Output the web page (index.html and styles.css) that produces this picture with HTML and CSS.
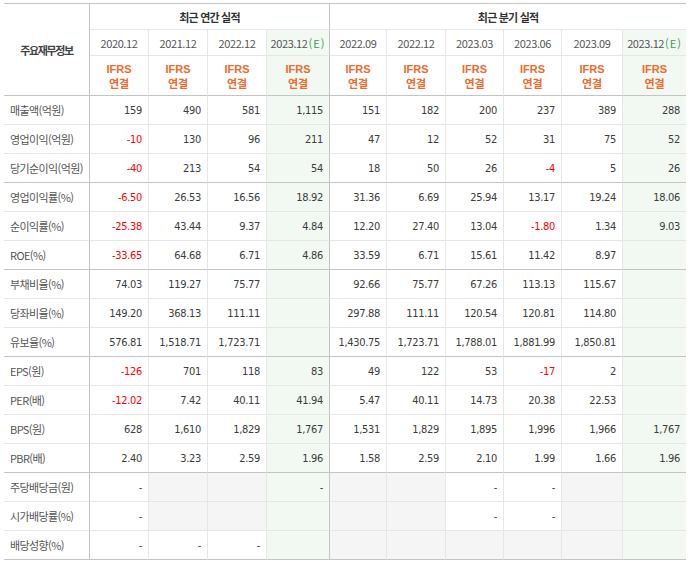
FILE: index.html
```html
<!DOCTYPE html>
<html lang="ko">
<head>
<meta charset="utf-8">
<title>주요재무정보</title>
<link rel="stylesheet" href="styles.css">
</head>
<body>
<table class="fin">
  <colgroup>
    <col class="c-label">
    <col class="c59"><col class="c59"><col class="c59"><col class="c63">
    <col class="c57"><col class="c59"><col class="c58"><col class="c58"><col class="c61"><col class="c63">
  </colgroup>
  <thead>
    <tr class="h1">
      <th rowspan="3" class="corner sep">주요재무정보</th>
      <th colspan="4" class="grp sep">최근 연간 실적</th>
      <th colspan="6" class="grp last">최근 분기 실적</th>
    </tr>
    <tr class="h2">
      <th class="date">2020.12</th>
      <th class="date">2021.12</th>
      <th class="date">2022.12</th>
      <th class="date est sep">2023.12<span class="e">(E)</span></th>
      <th class="date">2022.09</th>
      <th class="date">2022.12</th>
      <th class="date">2023.03</th>
      <th class="date">2023.06</th>
      <th class="date">2023.09</th>
      <th class="date est last">2023.12<span class="e">(E)</span></th>
    </tr>
    <tr class="h3">
      <th class="ifrs"><span class="ifrs-a">IFRS</span><span class="ifrs-b">연결</span></th>
      <th class="ifrs"><span class="ifrs-a">IFRS</span><span class="ifrs-b">연결</span></th>
      <th class="ifrs"><span class="ifrs-a">IFRS</span><span class="ifrs-b">연결</span></th>
      <th class="ifrs est sep"><span class="ifrs-a">IFRS</span><span class="ifrs-b">연결</span></th>
      <th class="ifrs"><span class="ifrs-a">IFRS</span><span class="ifrs-b">연결</span></th>
      <th class="ifrs"><span class="ifrs-a">IFRS</span><span class="ifrs-b">연결</span></th>
      <th class="ifrs"><span class="ifrs-a">IFRS</span><span class="ifrs-b">연결</span></th>
      <th class="ifrs"><span class="ifrs-a">IFRS</span><span class="ifrs-b">연결</span></th>
      <th class="ifrs"><span class="ifrs-a">IFRS</span><span class="ifrs-b">연결</span></th>
      <th class="ifrs est last"><span class="ifrs-a">IFRS</span><span class="ifrs-b">연결</span></th>
    </tr>
  </thead>
  <tbody id="rows"></tbody>
</table>
<script src="app.js"></script>
</body>
</html>
```

FILE: app.js
```js
var data = [
  ["매출액(억원)", ["159","490","581","1,115","151","182","200","237","389","288"], false],
  ["영업이익(억원)", ["-10","130","96","211","47","12","52","31","75","52"], false],
  ["당기순이익(억원)", ["-40","213","54","54","18","50","26","-4","5","26"], true],
  ["영업이익률(%)", ["-6.50","26.53","16.56","18.92","31.36","6.69","25.94","13.17","19.24","18.06"], false],
  ["순이익률(%)", ["-25.38","43.44","9.37","4.84","12.20","27.40","13.04","-1.80","1.34","9.03"], false],
  ["ROE(%)", ["-33.65","64.68","6.71","4.86","33.59","6.71","15.61","11.42","8.97",""], true],
  ["부채비율(%)", ["74.03","119.27","75.77","","92.66","75.77","67.26","113.13","115.67",""], false],
  ["당좌비율(%)", ["149.20","368.13","111.11","","297.88","111.11","120.54","120.81","114.80",""], false],
  ["유보율(%)", ["576.81","1,518.71","1,723.71","","1,430.75","1,723.71","1,788.01","1,881.99","1,850.81",""], true],
  ["EPS(원)", ["-126","701","118","83","49","122","53","-17","2",""], false],
  ["PER(배)", ["-12.02","7.42","40.11","41.94","5.47","40.11","14.73","20.38","22.53",""], false],
  ["BPS(원)", ["628","1,610","1,829","1,767","1,531","1,829","1,895","1,996","1,966","1,767"], false],
  ["PBR(배)", ["2.40","3.23","2.59","1.96","1.58","2.59","2.10","1.99","1.66","1.96"], true],
  ["주당배당금(원)", ["-","","","-","","","-","-","",""], false],
  ["시가배당률(%)", ["-","","","","","","-","-","",""], false],
  ["배당성향(%)", ["-","-","-","","","","","","",""], true]
];
var tbody = document.getElementById("rows");
data.forEach(function (row) {
  var tr = document.createElement("tr");
  if (row[2]) tr.className = "grp-end";
  var th = document.createElement("th");
  th.className = "label sep";
  th.textContent = row[0];
  tr.appendChild(th);
  row[1].forEach(function (v, i) {
    var td = document.createElement("td");
    var cls = ["num"];
    if (i === 3 || i === 9) cls.push("est");
    else if (v === "") cls.push("empty");
    if (i === 3) cls.push("sep");
    if (i === 9) cls.push("last");
    if (v.charAt(0) === "-" && v.length > 1) cls.push("neg");
    td.className = cls.join(" ");
    td.textContent = v;
    tr.appendChild(td);
  });
  tbody.appendChild(tr);
});
```

FILE: styles.css
```css
html, body {
  margin: 0;
  padding: 0;
  background: #fff;
}

.fin {
  margin: 3px 0 0 4px;
  width: 682px;
  table-layout: fixed;
  border-collapse: separate;
  border-spacing: 0;
  border-top: 1px solid #c4c4c4;
  font-family: "Noto Sans CJK KR", "Noto Sans", sans-serif;
  font-size: 11px;
  color: #444;
}

.c-label { width: 86px; }
.c57 { width: 57px; }
.c58 { width: 58px; }
.c59 { width: 59px; }
.c61 { width: 61px; }
.c63 { width: 63px; }

.fin th,
.fin td {
  box-sizing: border-box;
  padding: 0;
  border-right: 1px solid #e6e6e6;
  border-bottom: 1px solid #e6e6e6;
  vertical-align: middle;
  white-space: nowrap;
  overflow: hidden;
}

.fin .sep { border-right-color: #c4c4c4; }
.fin .last { border-right: 0; }

.fin .h1 th { height: 26px; }
.fin .h2 th { height: 26px; }
.fin .h3 th { height: 40px; border-bottom-color: #c4c4c4; }
.fin .corner { border-bottom-color: #c4c4c4; }

.fin .corner {
  font-weight: bold;
  color: #444;
  letter-spacing: -1.4px;
  text-align: center;
}

.fin .grp {
  font-weight: bold;
  color: #333;
  letter-spacing: -0.8px;
  text-align: center;
}

.fin .date {
  font-weight: normal;
  color: #555;
  letter-spacing: -0.4px;
  text-align: center;
}

.date .e {
  color: #3f9a5a;
  letter-spacing: 1px;
  margin-left: 1px;
}

.fin .ifrs {
  font-weight: bold;
  color: #ef6a2c;
  text-align: center;
  padding-top: 1px;
}

.ifrs-a {
  display: block;
  font-family: "Liberation Sans", Arial, sans-serif;
  line-height: 13px;
}

.ifrs-b {
  display: block;
  line-height: 13px;
  margin-top: 1px;
}

.fin tbody tr { height: 29px; }

.fin .label {
  height: 29px;
  text-align: left;
  padding-left: 6px;
  font-weight: normal;
  color: #555;
  letter-spacing: -0.6px;
}

.fin .num {
  height: 29px;
  text-align: right;
  padding-right: 6px;
  font-family: "DejaVu Sans Condensed", "DejaVu Sans", sans-serif;
  font-stretch: condensed;
  letter-spacing: -0.3px;
  color: #3c3c3c;
}

.fin .num.neg { color: #f00; }

.fin .est { background: #f2f8f2; }
.fin .empty { background: #f5f5f5; }

.fin .grp-end th,
.fin .grp-end td {
  border-bottom-color: #c4c4c4;
}
```
